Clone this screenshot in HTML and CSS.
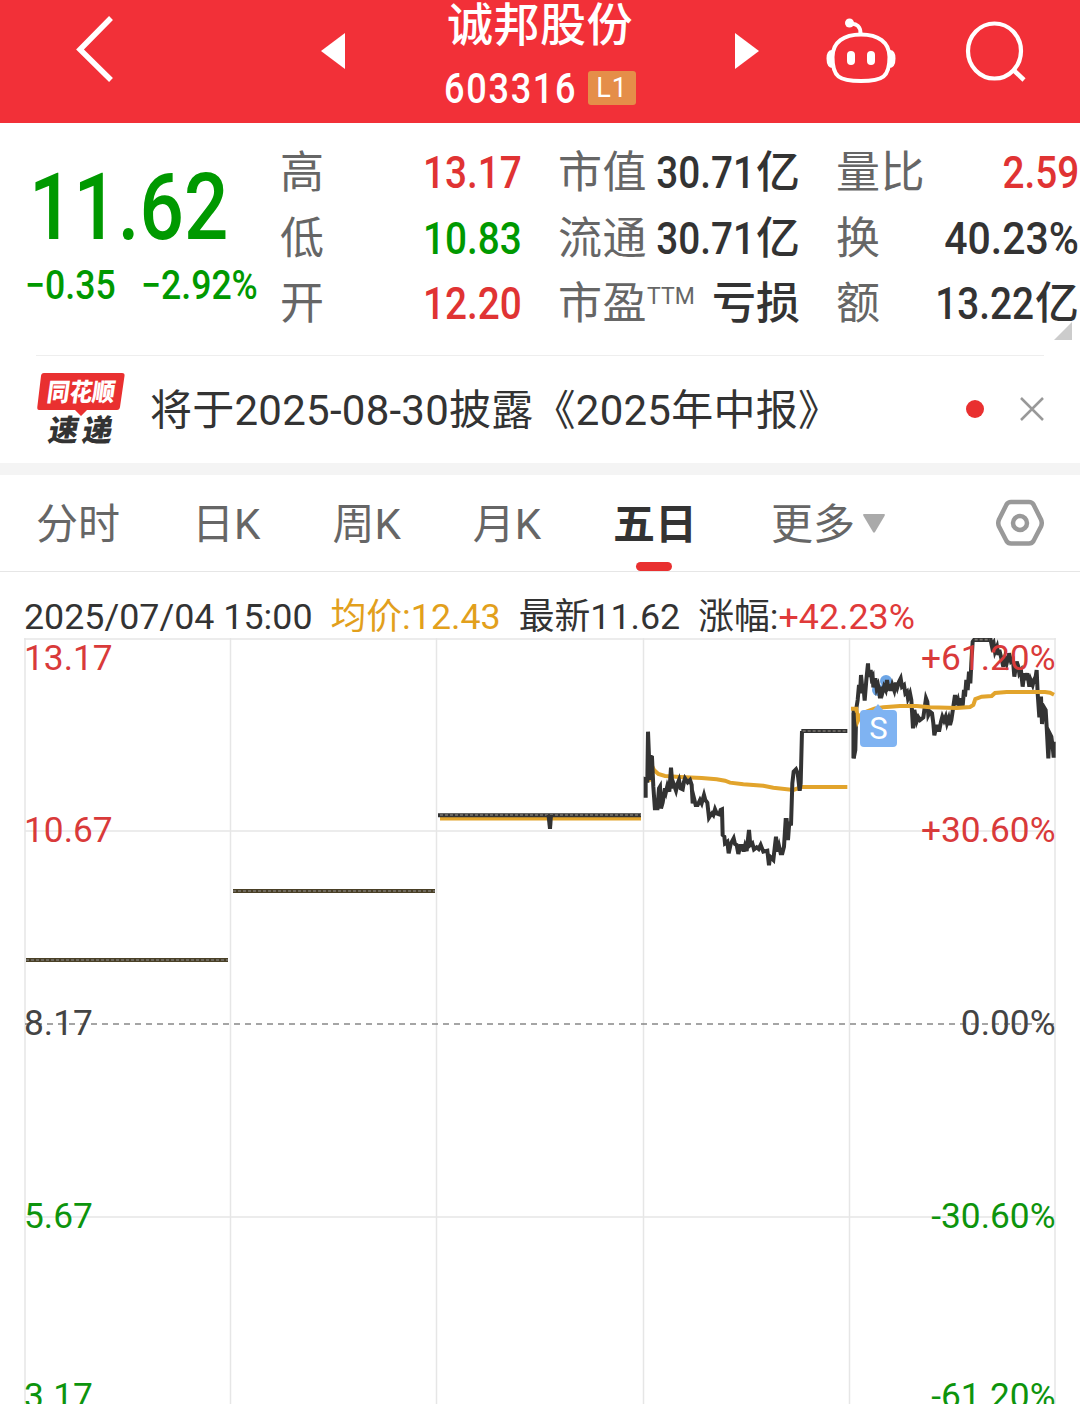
FILE: index.html
```html
<!DOCTYPE html>
<html lang="zh-CN">
<head>
    <meta charset="UTF-8">
    <title>诚邦股份 603316</title>
    <link rel="stylesheet" href="styles.css">
</head>
<body>
    <header class="header">
        <svg class="icon-back" width="38" height="68" viewBox="0 0 38 68">
            <path d="M35 3 L4 34.500 L35 65" fill="none" stroke="#fff" stroke-width="5.500"/>
        </svg>
        <svg class="icon-prev" width="24" height="36" viewBox="0 0 24 36"><path d="M0 18 L24 0 V36 Z" fill="#fff"/></svg>
        <div class="title">
            <div class="stock-name">诚邦股份</div>
            <div class="stock-code"><span class="code">603316</span><span class="level">L1</span></div>
        </div>
        <svg class="icon-next" width="24" height="36" viewBox="0 0 24 36"><path d="M24 18 L0 0 V36 Z" fill="#fff"/></svg>
        <svg class="icon-robot" width="72" height="68" viewBox="0 0 72 68">
            <path d="M36 17.500 C53 17.500 64.500 25 64.500 40 C64.500 60 58 64 36 64 C14 64 7.500 60 7.500 40 C7.500 25 19 17.500 36 17.500 Z" fill="none" stroke="#fff" stroke-width="4"/>
            <path d="M25 7 C32 6 35.500 10 35.500 16" fill="none" stroke="#fff" stroke-width="4"/>
            <circle cx="24.500" cy="6" r="4.500" fill="#fff"/>
            <path d="M7 33 Q1.500 33 1.500 41.500 Q1.500 51 8 51 Z M65 33 Q70.500 33 70.500 41.500 Q70.500 51 64 51 Z" fill="#fff"/>
            <rect x="22" y="34" width="8" height="14" rx="4" fill="#fff"/>
            <rect x="42" y="34" width="8" height="14" rx="4" fill="#fff"/>
        </svg>
        <svg class="icon-search" width="64" height="64" viewBox="0 0 64 64">
            <ellipse cx="30.500" cy="31" rx="26.500" ry="27.500" fill="none" stroke="#fff" stroke-width="4.200"/>
            <path d="M49 49.500 L60 60" stroke="#fff" stroke-width="4.500"/>
        </svg>
    </header>

    <section class="quote">
        <div class="price-box">
            <div class="price"><span>11.62</span></div>
            <div class="change"><span>−0.35</span><span>−2.92%</span></div>
        </div>
        <div class="stats">
            <div class="stat"><span class="label">高</span><span class="value up">13.17</span></div>
            <div class="stat"><span class="label">市值</span><span class="value">30.71<i>亿</i></span></div>
            <div class="stat"><span class="label">量比</span><span class="value up">2.59</span></div>
            <div class="stat"><span class="label">低</span><span class="value down">10.83</span></div>
            <div class="stat"><span class="label">流通</span><span class="value">30.71<i>亿</i></span></div>
            <div class="stat"><span class="label">换</span><span class="value percent">40.23%</span></div>
            <div class="stat"><span class="label">开</span><span class="value up">12.20</span></div>
            <div class="stat"><span class="label">市盈<sup>TTM</sup></span><span class="value-cn">亏损</span></div>
            <div class="stat"><span class="label">额</span><span class="value">13.22<i>亿</i></span></div>
        </div>
        <div class="corner"></div>
    </section>

    <section class="notice">
        <svg class="notice-logo" width="92" height="84" viewBox="0 -4 92 84">
            <path d="M8 1 H86 Q89 1 88.500 4 L84 35 Q83.500 38 81 38 H51 L45 44 L39 38 H3 Q1 38 1.300 35 L5 4 Q5.300 1 8 1 Z" fill="#e93030"/>
            <text class="logo-top" transform="translate(10 29) skewX(-8)" textLength="68" lengthAdjust="spacingAndGlyphs">同花顺</text>
            <text class="logo-bottom" transform="translate(11 69) skewX(-10)"><tspan x="0">速</tspan><tspan x="34">递</tspan></text>
        </svg>
        <span class="notice-text">将于2025-08-30披露《2025年中报》</span>
        <span class="dot"></span>
        <svg class="icon-close" width="24" height="24" viewBox="0 0 24 24"><path d="M1 1 L23 23 M23 1 L1 23" stroke="#999" stroke-width="2.500"/></svg>
    </section>

    <nav class="tabs">
        <span class="tab">分时</span>
        <span class="tab">日K</span>
        <span class="tab">周K</span>
        <span class="tab">月K</span>
        <span class="tab active">五日</span>
        <span class="tab">更多</span>
        <svg class="icon-more" width="22" height="19" viewBox="0 0 22 19"><path d="M1 0 H21 Q22.500 0 21.500 2 L12 18 Q11 19.500 10 18 L0.500 2 Q-.5 0 1 0 Z" fill="#aaa"/></svg>
        <svg class="icon-setting" width="48" height="48" viewBox="0 0 48 48">
            <path d="M15 3 H33 Q36 3 37.500 5.500 L45 20.500 Q46.500 24 45 27.500 L37.500 42 Q36 44.500 33 44.500 H15 Q12 44.500 10.500 42 L3 27.500 Q1.500 24 3 20.500 L10.500 5.500 Q12 3 15 3 Z" fill="none" stroke="#999" stroke-width="4.500"/>
            <circle cx="24" cy="24" r="7" fill="none" stroke="#999" stroke-width="4.500"/>
        </svg>
    </nav>

    <div class="info">
        <span>2025/07/04 15:00</span>
        <span class="avg">均价:12.43</span>
        <span>最新11.62</span>
        <span>涨幅:<b>+42.23%</b></span>
    </div>

    <svg class="chart" width="1080" height="766" viewBox="0 638 1080 766">
        <!-- grid -->
        <g class="grid">
            <path d="M24 639 H1056 M25 831 H1055 M25 1217 H1055"/>
            <path d="M25 638 V1404 M230.500 638 V1404 M436.500 638 V1404 M643.500 638 V1404 M849.500 638 V1404 M1055 638 V1404"/>
        </g>
        <path class="zero" d="M25 1024 H1055"/>

        <!-- first three days, limit up -->
        <path class="flat-brown" d="M26 960 H228 M233 891 H435"/>
        <path class="flat-dots" d="M26 960 H228 M233 891 H435"/>
        <path class="avg-line" d="M440 818.500 H641"/>
        <path class="flat" d="M438 815.300 H641"/>
        <path class="flat-dots" d="M440 815 H641"/>
        <path d="M546.500 815 H553 L552 829 H548 Z" fill="#333"/>

        <!-- day 4 -->
        <g transform="translate(630 720) scale(.33333)">
            <polyline class="avg-line" points="57,185 62,130 72,150 85,162 105,168 150,171 215,174 260,178 285,182 300,188 340,193 400,197 430,203 490,210 515,201 652,201"/>
            <polyline class="price-line" points="47,233 47,178 52,180 54,35 57,110 59,180 62,110 66,112 70,200 75,270 80,240 82,270 87,205 90,200 93,265 98,248 105,205 108,215 112,198 118,215 123,143 128,205 132,195 138,212 143,190 147,180 152,205 158,208 162,185 165,175 173,187 180,180 185,195 188,250 192,235 197,255 203,255 210,240 215,250 222,225 226,240 232,248 237,293 242,285 246,280 250,285 255,268 260,280 268,283 272,270 276,268 278,345 283,350 285,370 292,365 296,400 302,372 311,355 315,372 320,375 325,402 331,378 337,378 341,395 345,378 350,393 357,330 361,375 367,370 372,388 380,382 386,387 392,375 400,395 412,392 417,436 420,410 430,420 434,385 438,350 442,395 447,378 452,400 457,400 462,380 467,300 470,300 474,360 478,305 483,316 487,190 491,155 498,148 503,160 509,212 512,190 516,33"/>
            <path class="flat" d="M514 33 H652"/>
            <path class="flat-dots" d="M518 33 H652"/>
        </g>

        <!-- day 5 -->
        <circle cx="886" cy="681" r="6" fill="#6ca5e6"/>
        <circle cx="878" cy="690" r="6" fill="#6ca5e6"/>
        <g transform="translate(840 630) scale(.33333)">
            <polyline class="price-line" points="41,232 41,385 46,360 49,235 53,210 57,165 60,190 63,135 67,175 70,165 74,212 79,150 84,100 86,140 92,120 95,145 98,140 100,172 106,145 110,175 114,165 117,180 120,205 124,170 128,185 132,170 137,180 141,150 145,175 150,170 153,182 157,165 163,182 168,158 172,172 177,155 182,145 186,170 192,165 196,190 201,185 204,205 210,190 214,210 219,295 223,240 230,275 235,262 240,270 250,262 258,205 262,215 265,255 270,245 276,250 280,280 283,316 290,285 294,300 298,300 303,275 307,260 312,272 317,260 321,280 326,265 330,285 334,270 340,230 345,195 349,225 354,210 358,230 362,205 368,228 372,180 375,200 379,150 383,180 387,125 391,160 394,100 398,35 402,30 452,30 456,50 461,40 465,65 471,50 475,75 478,60 484,85 490,110 495,85 500,100 507,70 513,95 519,90 523,140 530,95 535,110 538,130 543,122 548,170 553,130 556,150 562,130 568,170 572,150 578,165 582,150 587,140 590,120 593,190 598,262 603,200 606,282 611,230 617,240 620,290 625,385 629,310 634,320 638,350 641,383 641,335"/>
            <polyline class="avg-line" points="33,236 49,236 54,272 62,255 80,245 105,235 130,232 180,228 230,228 270,232 350,234 390,231 400,225 406,207 425,200 455,198 465,189 500,186 615,186 630,188 642,194"/>
            <path class="flat-dots" d="M404 29 H450"/>
            <path class="price-line" d="M41 248 V385"/>
        </g>
        <path d="M864 710 H873 L878 704 L883 710 H893 Q897 710 897 714 V743 Q897 747 893 747 H864 Q860 747 860 743 V714 Q860 710 864 710 Z" fill="#7fb3f2"/>
        <text class="sell" x="878.500" y="739">S</text>

        <!-- axis labels -->
        <g class="axis">
            <text class="up" x="24" y="670">13.17</text>
            <text class="up" x="24" y="842">10.67</text>
            <text x="24" y="1035">8.17</text>
            <text class="down" x="24" y="1228">5.67</text>
            <text class="down" x="24" y="1408">3.17</text>
        </g>
        <g class="axis right">
            <text class="up" x="1055.500" y="670">+61.20%</text>
            <text class="up" x="1055.500" y="842">+30.60%</text>
            <text x="1055.500" y="1035">0.00%</text>
            <text class="down" x="1055.500" y="1228">-30.60%</text>
            <text class="down" x="1055.500" y="1408">-61.20%</text>
        </g>
    </svg>
</body>
</html>
```

FILE: styles.css
```css
* {
    box-sizing: border-box;
}
body {
    margin: 0;
    width: 1080px;
    height: 1404px;
    overflow: hidden;
    background: #fff;
    color: #333;
    font-family: Roboto, "Noto Sans CJK SC", sans-serif;
}
svg {
    display: block;
    flex: none;
}
.up {
    color: #e03333;
    fill: #d93a3a;
}
.down {
    color: #090;
    fill: #0d940d;
}

/* header */
.header {
    display: flex;
    height: 123px;
    padding-left: 76px;
    background: #f23038;
    color: #fff;
}
.icon-back {
    margin-top: 15px;
}
.icon-prev {
    margin: 33px 0 0 207px;
}
.icon-next {
    margin-top: 33px;
}
.title {
    width: 390px;
    text-align: center;
}
.stock-name {
    height: 58px;
    line-height: 51px;
    font-size: 46px;
    font-weight: 500;
    letter-spacing: 0.5px;
}
.stock-code {
    display: flex;
    justify-content: center;
    align-items: center;
    height: 59px;
}
.code {
    width: 132px;
    margin-right: 12px;
    font-size: 43px;
    font-weight: 500;
    line-height: 60px;
    letter-spacing: 2px;
    transform: scaleX(0.84);
    transform-origin: left;
    white-space: nowrap;
}
.level {
    width: 48px;
    height: 34px;
    border-radius: 3px;
    background: #e58e49;
    font-size: 27px;
    line-height: 34px;
    letter-spacing: 1px;
}
.icon-robot {
    margin: 17px 0 0 66px;
}
.icon-search {
    margin: 20px 0 0 67px;
}

/* quote */
.quote {
    position: relative;
    display: flex;
    height: 232px;
}
.price-box {
    width: 280px;
    color: #090;
    font-weight: 500;
}
.price {
    height: 128px;
    padding: 32px 0 0 29px;
    font-size: 93px;
    line-height: 106px;
}
.price span {
    display: inline-block;
    transform: scaleX(0.84);
    transform-origin: left;
}
.change {
    display: flex;
    height: 66px;
    padding-left: 25px;
    font-size: 40px;
    line-height: 69px;
}
.change span {
    width: 116px;
    transform: scaleX(0.89);
    transform-origin: left;
    white-space: nowrap;
}
.stats {
    display: grid;
    grid-template-columns: 242px 242px 243px;
    grid-template-rows: 66px 65px 66px;
    column-gap: 36px;
    width: 800px;
    padding-top: 17px;
}
.stat {
    display: flex;
    justify-content: space-between;
    white-space: nowrap;
    line-height: 66px;
}
.label {
    color: #666;
    font-size: 44px;
    letter-spacing: 0.5px;
}
.label sup {
    font-size: 23px;
    line-height: 0;
    vertical-align: 15px;
    letter-spacing: 0;
}
.value {
    font-size: 45px;
    font-weight: 500;
    transform: scaleX(0.86);
    transform-origin: right;
    margin-left: -60px;
}
.value.percent {
    transform: scaleX(0.91);
}
.value i {
    display: inline-block;
    font-style: normal;
    font-size: 44px;
    transform: scaleX(1.16);
    transform-origin: right;
    margin-left: 8px;
}
.value-cn {
    font-size: 44px;
    font-weight: 500;
}
.corner {
    position: absolute;
    right: 8px;
    top: 199px;
    border-left: 18px solid transparent;
    border-bottom: 18px solid #ccc;
}

/* notice */
.notice {
    display: flex;
    align-items: center;
    height: 108px;
    margin: 0 36px;
    border-top: 1px solid #eee;
}
.notice-text {
    margin: 2px 0 0 22px;
    font-size: 42px;
    line-height: 60px;
    letter-spacing: 0.25px;
    white-space: nowrap;
}
.logo-top {
    fill: #fff;
    font-size: 25px;
    font-weight: 900;
}
.logo-bottom {
    fill: #333;
    font-size: 30px;
    font-weight: 900;
}
.dot {
    width: 18px;
    height: 18px;
    margin: 0 0 2px auto;
    border-radius: 50%;
    background: #e93030;
}
.icon-close {
    margin: 0 0 2px 36px;
}

/* tabs */
.tabs {
    display: flex;
    height: 109px;
    padding: 0 36px;
    border-top: 12px solid #f4f4f4;
    border-bottom: 1px solid #e6e6e6;
    font-size: 42px;
    line-height: 100px;
    color: #666;
}
.tab {
    margin-right: 72px;
    white-space: nowrap;
}
.tab.active {
    position: relative;
    color: #333;
    font-weight: 700;
    margin-right: 74px;
}
.tab.active::after {
    content: "";
    position: absolute;
    left: 23px;
    top: 87px;
    width: 36px;
    height: 9px;
    border-radius: 5px;
    background: #e93030;
}
.icon-more {
    margin: 39px 0 0 -64px;
}
.icon-setting {
    margin: 24px 0 0 auto;
}

/* chart */
.info {
    display: flex;
    gap: 18px;
    height: 66px;
    padding-left: 24px;
    font-size: 35.8px;
    line-height: 90px;
    white-space: nowrap;
}
.info b {
    color: #e03a3a;
    font-weight: 400;
}
.info .avg {
    color: #e2a01c;
}
.grid path {
    fill: none;
    stroke: #e6e6e6;
    stroke-width: 1.5;
}
.zero {
    stroke: #888;
    stroke-width: 1.5;
    stroke-dasharray: 6 5;
}
.price-line,
.avg-line {
    fill: none;
    stroke: #333;
    stroke-width: 4;
    vector-effect: non-scaling-stroke;
}
.avg-line {
    stroke: #e2a42c;
}
.flat,
.flat-brown,
.flat-dots {
    stroke: #333;
    stroke-width: 4;
    vector-effect: non-scaling-stroke;
}
.flat-brown {
    stroke: #4a4026;
}
.flat-dots {
    stroke: #7a7670;
    stroke-width: 1.6;
    stroke-dasharray: 3 2;
}
.axis text {
    font-size: 35.3px;
}
.axis text:not(.up):not(.down) {
    fill: #444;
}
.axis.right {
    text-anchor: end;
}
.sell {
    fill: #fff;
    font-size: 31px;
    text-anchor: middle;
}
```
